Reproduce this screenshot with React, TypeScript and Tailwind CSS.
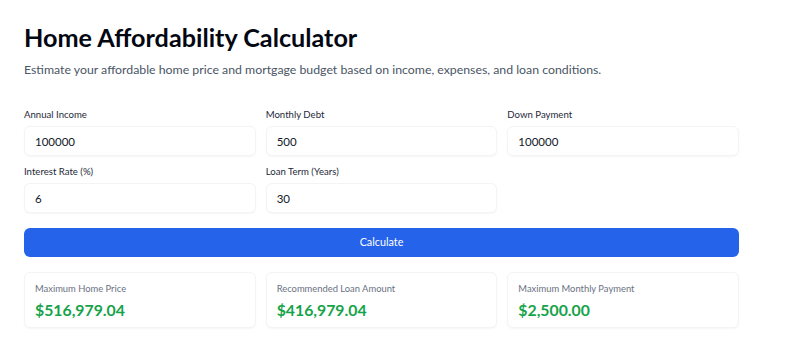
import React from "react";

const font = { fontFamily: 'Lato, "Open Sans", sans-serif' };

function Field({ label, value }: { label: string; value: string }) {
  return (
    <div className="flex flex-col">
      <label className="text-[9.6px] leading-4 text-gray-800 mb-[3px]">{label}</label>
      <input
        readOnly
        value={value}
        className="h-[30px] rounded-md border border-gray-100 bg-white px-[10px] text-[11.5px] text-gray-900 shadow-[0_1px_2px_rgba(0,0,0,0.04)] outline-none"
      />
    </div>
  );
}

function Result({ label, value }: { label: string; value: string }) {
  return (
    <div className="h-[56px] rounded-md border border-gray-100 bg-white px-[10px] pt-[8px] shadow-[0_1px_2px_rgba(0,0,0,0.04)]">
      <div className="text-[9.4px] leading-4 text-gray-500">{label}</div>
      <div className="mt-[1px] text-[15.8px] leading-6 font-bold text-[#16a34a]">{value}</div>
    </div>
  );
}

export default function App() {
  return (
    <div className="w-[800px] h-[348px] bg-white" style={font}>
      <div className="ml-6 w-[715px] pt-[21px]">
        <h1 className="text-[25.2px] leading-8 font-bold text-gray-950">Home Affordability Calculator</h1>
        <p className="mt-[7px] text-[12.3px] leading-5 text-gray-600">
          Estimate your affordable home price and mortgage budget based on income, expenses, and loan conditions.
        </p>
        <div className="mt-[27px] grid grid-cols-3 gap-x-[10px] gap-y-[8px]">
          <Field label="Annual Income" value="100000" />
          <Field label="Monthly Debt" value="500" />
          <Field label="Down Payment" value="100000" />
          <Field label="Interest Rate (%)" value="6" />
          <Field label="Loan Term (Years)" value="30" />
        </div>
        <button className="mt-[15px] h-[29px] w-full rounded-md bg-[#2563eb] text-[10.8px] text-white">Calculate</button>
        <div className="mt-[15px] grid grid-cols-3 gap-[10px]">
          <Result label="Maximum Home Price" value="$516,979.04" />
          <Result label="Recommended Loan Amount" value="$416,979.04" />
          <Result label="Maximum Monthly Payment" value="$2,500.00" />
        </div>
      </div>
    </div>
  );
}
